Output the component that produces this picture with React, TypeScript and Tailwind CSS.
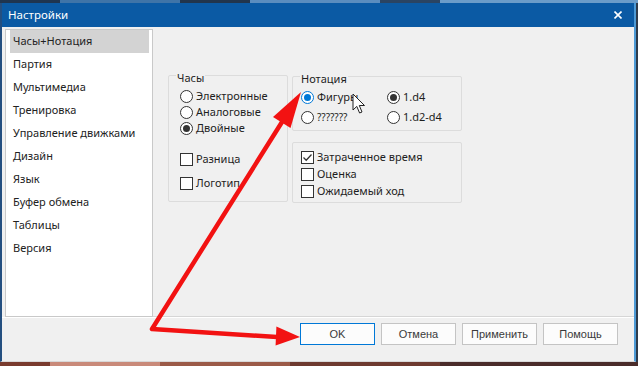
import React from 'react';

const menu = [
  'Часы+Нотация',
  'Партия',
  'Мультимедиа',
  'Тренировка',
  'Управление движками',
  'Дизайн',
  'Язык',
  'Буфер обмена',
  'Таблицы',
  'Версия',
];

function Radio({ checked = false, focused = false }: { checked?: boolean; focused?: boolean }) {
  return (
    <span
      className={
        'flex h-[13px] w-[13px] shrink-0 items-center justify-center rounded-full border bg-white ' +
        (focused ? 'border-[#0078d7]' : 'border-[#333333]')
      }
    >
      {checked ? (
        <span className={'h-[7px] w-[7px] rounded-full ' + (focused ? 'bg-[#0078d7]' : 'bg-[#333333]')} />
      ) : null}
    </span>
  );
}

function Check({ checked = false }: { checked?: boolean }) {
  return (
    <span className="flex h-[13px] w-[13px] shrink-0 items-center justify-center border border-[#333333] bg-white">
      {checked ? (
        <svg width="11" height="11" viewBox="0 0 11 11">
          <path d="M1.5 5.5 L4.2 8.2 L9.5 2.5" fill="none" stroke="#333" strokeWidth="1.3" />
        </svg>
      ) : null}
    </span>
  );
}

function Group({ label, className, children }: { label?: string; className: string; children: React.ReactNode }) {
  return (
    <div className={'relative rounded-[2px] border border-[#dcdcdc] ' + className}>
      {label ? (
        <span className="absolute left-[7px] top-[-5px] bg-[#f0f0f0] px-[1px] text-[11px] leading-[14px] text-[#1e1e1e]">
          {label}
        </span>
      ) : null}
      {children}
    </div>
  );
}

function Btn({ label, primary = false }: { label: string; primary?: boolean }) {
  return (
    <div
      className={
        "flex h-[22px] w-[75px] items-center justify-center border bg-[#fcfcfc] font-['Liberation_Sans',sans-serif] text-[11px] text-[#3a3a3a] " +
        (primary ? 'border-[#0078d7]' : 'border-[#c4c4c4]')
      }
    >
      {label}
    </div>
  );
}

export default function App() {
  return (
    <div className="relative flex h-[366px] w-[638px] flex-col overflow-hidden bg-[#2e3b4b] font-['Noto_Sans',sans-serif]">
      <div className="flex h-[3px] shrink-0">
        <div className="w-[60px] bg-[#1f3550]" />
        <div className="w-[120px] bg-[#3f74a8]" />
        <div className="w-[70px] bg-[#22354c]" />
        <div className="w-[130px] bg-[#5b8dbf]" />
        <div className="w-[60px] bg-[#2a4463]" />
        <div className="flex-1 bg-[#6b9cc9]" />
      </div>

      <div className="flex h-[359px] w-[636px] shrink-0 flex-col border-x-2 border-b border-l-[#244f80] border-r-[#4d9ad6] border-b-[#d8d8d8]">
        <div className="flex h-[24px] shrink-0 items-center justify-between bg-[#0b5aa4] pl-[6px] pr-[12px]">
          <span className="text-[11.5px] text-white">Настройки</span>
          <svg width="8" height="8" viewBox="0 0 8 8">
            <path d="M0.5 0.5 L7.5 7.5 M7.5 0.5 L0.5 7.5" stroke="white" strokeWidth="1.6" />
          </svg>
        </div>

        <div className="flex flex-1 flex-col bg-[#f0f0f0]">
          <div className="flex h-[290px] shrink-0">
            <div className="ml-[3px] mt-[2px] flex h-[288px] w-[148px] shrink-0 flex-col border border-[#c9c9c9] bg-white pl-[4px] pr-[3px]">
              {menu.map((m, i) => (
                <div
                  key={m}
                  className={
                    'flex h-[23px] shrink-0 items-center pl-[3px] text-[11px] text-[#222222] ' +
                    (i === 0 ? 'bg-[#d3d3d3]' : '')
                  }
                >
                  {m}
                </div>
              ))}
            </div>

            <div className="flex flex-1 border-b border-[#d6d6d6] pl-[15px] pt-[48px]">
              <Group label="Часы" className="h-[127px] w-[120px]">
                <div className="flex flex-col pl-[11px] pt-[12px] text-[11px] text-[#1e1e1e]">
                  <div className="flex h-[16px] items-center gap-[3px]">
                    <Radio />
                    <span>Электронные</span>
                  </div>
                  <div className="flex h-[16px] items-center gap-[3px]">
                    <Radio />
                    <span>Аналоговые</span>
                  </div>
                  <div className="flex h-[16px] items-center gap-[3px]">
                    <Radio checked />
                    <span>Двойные</span>
                  </div>
                  <div className="mt-[15px] flex h-[17px] items-center gap-[3px]">
                    <Check />
                    <span>Разница</span>
                  </div>
                  <div className="mt-[7px] flex h-[17px] items-center gap-[3px]">
                    <Check />
                    <span>Логотип</span>
                  </div>
                </div>
              </Group>

              <div className="ml-[4px] flex w-[170px] flex-col">
                <Group label="Нотация" className="mt-[1px] h-[55px]">
                  <div className="grid grid-cols-[86px_1fr] pl-[8px] pt-[10px] text-[11px] text-[#1e1e1e]">
                    <div className="flex h-[20px] items-center gap-[3px]">
                      <Radio checked focused />
                      <span>Фигуры</span>
                    </div>
                    <div className="flex h-[20px] items-center gap-[3px]">
                      <Radio checked />
                      <span>1.d4</span>
                    </div>
                    <div className="flex h-[20px] items-center gap-[3px]">
                      <Radio />
                      <span className="text-[10px]">???????</span>
                    </div>
                    <div className="flex h-[20px] items-center gap-[3px]">
                      <Radio />
                      <span>1.d2-d4</span>
                    </div>
                  </div>
                </Group>
                <Group className="mt-[11px] h-[61px]">
                  <div className="flex flex-col pl-[8px] pt-[6px] text-[11px] text-[#1e1e1e]">
                    <div className="flex h-[17px] items-center gap-[3px]">
                      <Check checked />
                      <span>Затраченное время</span>
                    </div>
                    <div className="flex h-[17px] items-center gap-[3px]">
                      <Check />
                      <span>Оценка</span>
                    </div>
                    <div className="flex h-[17px] items-center gap-[3px]">
                      <Check />
                      <span>Ожидаемый ход</span>
                    </div>
                  </div>
                </Group>
              </div>
            </div>
          </div>
          <div className="h-[1px] bg-white" />

          <div className="flex justify-end gap-[6px] pr-[16px] pt-[5px]">
            <Btn label="OK" primary />
            <Btn label="Отмена" />
            <Btn label="Применить" />
            <Btn label="Помощь" />
          </div>
        </div>
      </div>

      <div className="flex flex-1">
        <div className="w-[50px] bg-[#7a3b2e]" />
        <div className="w-[110px] bg-[#c98a7a]" />
        <div className="w-[130px] bg-[#9b5a48]" />
        <div className="w-[150px] bg-[#6e3a30]" />
        <div className="flex-1 bg-[#4a2c2a]" />
      </div>

      {/* annotation arrows */}
      <svg className="pointer-events-none absolute left-0 top-0" width="638" height="366" viewBox="0 0 638 366">
        <polyline points="282,122 152,329 277,337" fill="none" stroke="#f21212" strokeWidth="4.5" strokeLinejoin="round" strokeLinecap="round" />
        <polygon points="301,92 290.5,128 273,117" fill="#f21212" />
        <polygon points="300,337 276.4,326.5 275.6,345.5" fill="#f21212" />
      </svg>

      {/* mouse cursor */}
      <svg className="pointer-events-none absolute left-[352px] top-[93px]" width="14" height="22" viewBox="0 0 14 22">
        <path d="M1 1 L1 17 L4.8 13.4 L7.6 20 L10 19 L7.3 12.5 L12.5 12.5 Z" fill="white" stroke="#222" strokeWidth="1" strokeLinejoin="round" />
      </svg>
    </div>
  );
}
